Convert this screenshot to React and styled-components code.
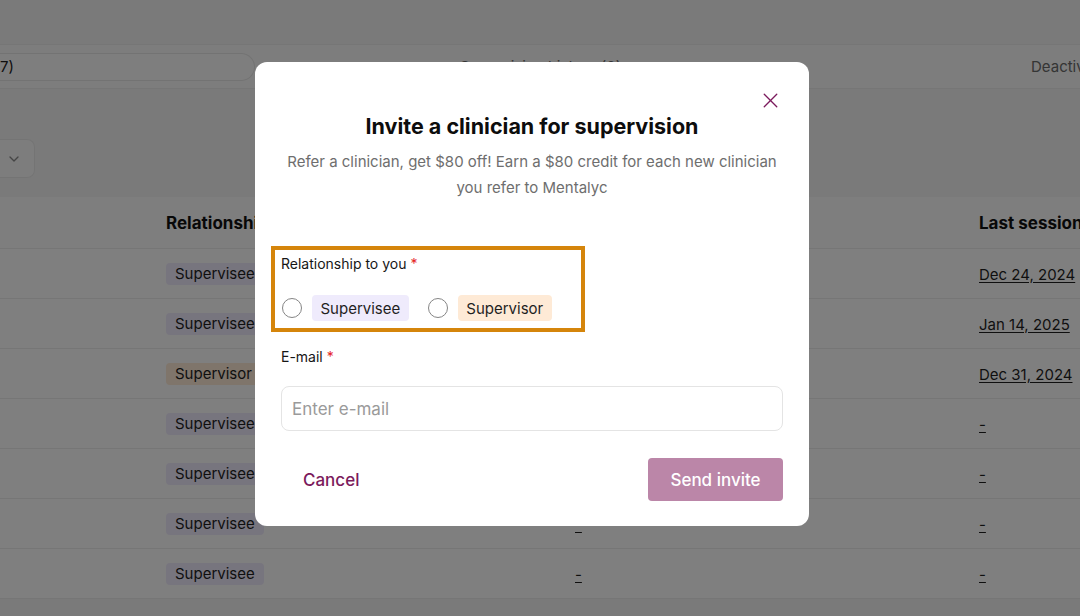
import React, { useState } from 'react'
import styled, { createGlobalStyle } from 'styled-components'
import { ChevronDown, X } from 'lucide-react'

const GlobalStyle = createGlobalStyle`
  body {
    margin: 0;
    background: #f4f4f4;
    font-family: Inter, "Noto Sans", sans-serif;
    overflow: hidden;
  }
`

// Background page

const Page = styled.div`
  width: 1080px;
  height: 616px;
  display: flex;
  flex-direction: column;
`

const TopBar = styled.div`
  height: 44px;
  background: #f4f4f4;
`

const TabBar = styled.div`
  height: 43px;
  background: #fbfbfb;
  border-top: 1px solid #ececec;
  border-bottom: 1px solid #ececec;
  display: grid;
  grid-template-columns: 255px 205px 571px auto;
  align-items: center;
`

const SearchPill = styled.div`
  height: 28px;
  box-sizing: border-box;
  border: 1px solid #e6e6e6;
  border-left: none;
  border-radius: 0 14px 14px 0;
  background: #fdfdfd;
  display: flex;
  align-items: center;
  font-size: 15px;
  color: #1f1f1f;
`

const Tab = styled.span`
  grid-column: ${({ $col }) => $col};
  font-size: 15px;
  color: #6a6a6a;
  white-space: nowrap;
`

const Toolbar = styled.div`
  height: 108px;
  display: flex;
  align-items: flex-start;
  padding-top: 50px;
  box-sizing: border-box;
`

const DropButton = styled.div`
  width: 35px;
  height: 39px;
  box-sizing: border-box;
  border: 1px solid #e9e9e9;
  border-left: none;
  border-radius: 0 8px 8px 0;
  background: #fbfbfb;
  display: flex;
  align-items: center;
  justify-content: flex-end;
  padding-right: 12px;
  color: #8a8a8a;
`

const Table = styled.div`
  background: #fff;
  display: flex;
  flex-direction: column;
`

const Row = styled.div`
  display: grid;
  grid-template-columns: 166px 409px 404px 1fr;
  align-items: center;
  height: ${({ $head }) => ($head ? 51 : 49)}px;
  border-bottom: 1px solid #ececec;
  ${({ $head }) => $head && 'background: #fcfcfc;'}
`

const HeadCell = styled.div`
  font-size: 17px;
  font-weight: 700;
  color: #111;
  white-space: nowrap;
  overflow: hidden;
`

const Chip = styled.span`
  display: inline-flex;
  align-items: center;
  height: ${({ $big }) => ($big ? 26 : 22)}px;
  padding: 0 ${({ $big }) => ($big ? 8.5 : 9)}px;
  border-radius: 4px;
  font-size: 15px;
  color: #1f1f1f;
  background: ${({ $kind }) => ($kind === 'supervisor' ? '#feead6' : '#efebfc')};
  white-space: nowrap;
`

const LinkText = styled.span`
  font-size: 15px;
  color: #1f1f1f;
  text-decoration: underline;
  text-underline-offset: 2px;
  white-space: nowrap;
`

// Modal

const Overlay = styled.div`
  position: fixed;
  inset: 0;
  background: rgba(0, 0, 0, 0.5);
  display: flex;
  align-items: flex-start;
  padding: 62px 0 0 255px;
`

const Modal = styled.div`
  width: 554px;
  box-sizing: border-box;
  background: #fff;
  border-radius: 12px;
  padding: 26px 26px 25px;
  display: flex;
  flex-direction: column;
`

const CloseRow = styled.div`
  display: flex;
  justify-content: flex-end;
  align-items: center;
  height: 24px;
  margin-right: 0;
  color: #7b1a5c;
`

const CloseButton = styled.button`
  border: none;
  background: none;
  padding: 0;
  color: inherit;
  cursor: pointer;
  display: flex;
`

const Title = styled.h2`
  margin: 1px 0 0;
  font-size: 21.5px;
  line-height: 26px;
  font-weight: 700;
  color: #0d0d0d;
  text-align: center;
`

const Subtitle = styled.p`
  margin: 10px 0 0;
  font-size: 15px;
  line-height: 26px;
  color: #6e6e6e;
  text-align: center;
`

const Highlight = styled.div`
  width: 314px;
  margin: 45px 0 0 -10px;
  box-sizing: border-box;
  border: 4px solid #d5850b;
  padding: 5px 0 7px 6px;
`

const Label = styled.div`
  font-size: 14px;
  line-height: 17px;
  color: #161616;
`

const Required = styled.span`
  color: #e5251f;
`

const RadioRow = styled.div`
  display: flex;
  align-items: center;
  margin-top: 23px;
`

const RadioOption = styled.label`
  display: flex;
  align-items: center;
  gap: 10px;
  margin-right: 18px;
  cursor: pointer;
`

const RadioCircle = styled.span`
  width: 20px;
  height: 20px;
  margin-left: 1px;
  box-sizing: border-box;
  border-radius: 50%;
  border: 1.5px solid #858585;
  background: ${({ $on }) => ($on ? '#7b1a5c' : '#fff')};
`

const FieldLabel = styled(Label)`
  margin-top: 16px;
`

const Input = styled.input`
  margin-top: 21px;
  height: 45px;
  box-sizing: border-box;
  border: 1px solid #e4e4e4;
  border-radius: 8px;
  padding: 0 10px;
  font-family: inherit;
  font-size: 17px;
  color: #222;
  outline: none;

  &::placeholder {
    color: #9a9a9a;
  }
`

const Actions = styled.div`
  display: flex;
  justify-content: space-between;
  align-items: center;
  margin-top: 27px;
`

const CancelButton = styled.button`
  border: none;
  background: none;
  padding: 0 0 0 22px;
  font-family: inherit;
  font-size: 17px;
  font-weight: 500;
  color: #7b1a5c;
  cursor: pointer;
`

const SendButton = styled.button`
  width: 135px;
  height: 43px;
  border: none;
  border-radius: 4px;
  background: #bb86a8;
  font-family: inherit;
  font-size: 17px;
  font-weight: 500;
  color: #fff;
  cursor: not-allowed;
`

const rows = [
  { kind: 'supervisee', last: 'Dec 24, 2024' },
  { kind: 'supervisee', last: 'Jan 14, 2025' },
  { kind: 'supervisor', last: 'Dec 31, 2024' },
  { kind: 'supervisee', last: '-' },
  { kind: 'supervisee', last: '-' },
  { kind: 'supervisee', last: '-' },
  { kind: 'supervisee', last: '-' },
]

const App = () => {
  const [relation, setRelation] = useState('')
  const [email, setEmail] = useState('')

  return (
    <>
      <GlobalStyle />
      <Page>
        <TopBar />
        <TabBar>
          <SearchPill>7)</SearchPill>
          <Tab $col="3 / 4">Supervision history (0)</Tab>
          <Tab $col="4 / 5">Deactivated</Tab>
        </TabBar>
        <Toolbar>
          <DropButton>
            <ChevronDown size={16} strokeWidth={2} />
          </DropButton>
        </Toolbar>
        <Table>
          <Row $head>
            <div />
            <HeadCell>Relationship</HeadCell>
            <HeadCell>Next session</HeadCell>
            <HeadCell>Last session</HeadCell>
          </Row>
          {rows.map((r, i) => (
            <Row key={i}>
              <div />
              <div>
                <Chip $kind={r.kind}>{r.kind === 'supervisor' ? 'Supervisor' : 'Supervisee'}</Chip>
              </div>
              <div>
                <LinkText>-</LinkText>
              </div>
              <div>
                <LinkText>{r.last}</LinkText>
              </div>
            </Row>
          ))}
        </Table>
      </Page>

      <Overlay>
        <Modal>
          <CloseRow>
            <CloseButton aria-label="Close">
              <X size={25} strokeWidth={1.3} />
            </CloseButton>
          </CloseRow>
          <Title>Invite a clinician for supervision</Title>
          <Subtitle>
            Refer a clinician, get $80 off! Earn a $80 credit for each new clinician
            <br />
            you refer to Mentalyc
          </Subtitle>

          <Highlight>
            <Label>
              Relationship to you <Required>*</Required>
            </Label>
            <RadioRow>
              <RadioOption onClick={() => setRelation('supervisee')}>
                <RadioCircle $on={relation === 'supervisee'} />
                <Chip $big $kind="supervisee">Supervisee</Chip>
              </RadioOption>
              <RadioOption onClick={() => setRelation('supervisor')}>
                <RadioCircle $on={relation === 'supervisor'} />
                <Chip $big $kind="supervisor">Supervisor</Chip>
              </RadioOption>
            </RadioRow>
          </Highlight>

          <FieldLabel>
            E-mail <Required>*</Required>
          </FieldLabel>
          <Input
            type="email"
            placeholder="Enter e-mail"
            value={email}
            onChange={(e) => setEmail(e.target.value)}
          />

          <Actions>
            <CancelButton type="button">Cancel</CancelButton>
            <SendButton type="button" disabled>Send invite</SendButton>
          </Actions>
        </Modal>
      </Overlay>
    </>
  )
}

export default App
